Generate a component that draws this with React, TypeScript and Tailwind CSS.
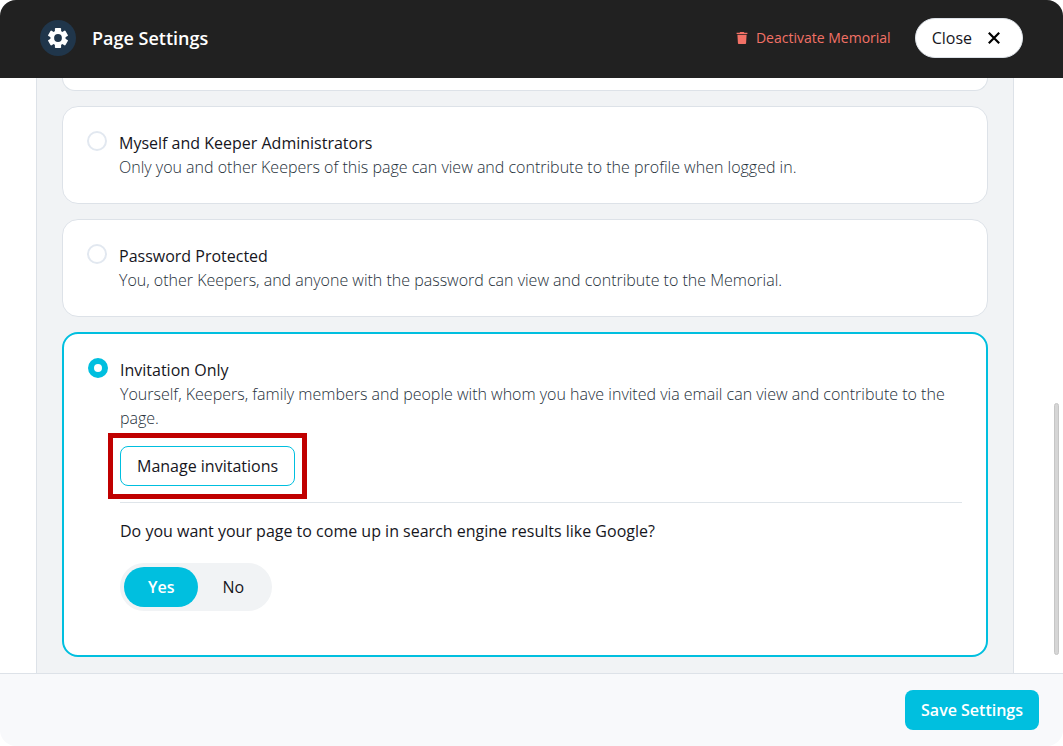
import { useState } from "react";
import type { ReactNode } from "react";

type OptionProps = {
  value: string;
  title: string;
  desc: string;
  selected: string;
  onSelect: (value: string) => void;
  children?: ReactNode;
};

const GearIcon = () => (
  <svg viewBox="0 0 20 20" className="size-5" fill="currentColor" aria-hidden="true">
    <circle cx="10" cy="10" r="7.6" />
    <rect x="6.9" y="0" width="6.2" height="20" rx="0.8" />
    <rect x="6.9" y="0" width="6.2" height="20" rx="0.8" transform="rotate(60 10 10)" />
    <rect x="6.9" y="0" width="6.2" height="20" rx="0.8" transform="rotate(120 10 10)" />
    <circle cx="10" cy="10" r="3.9" fill="#20364b" />
  </svg>
);

const TrashIcon = () => (
  <svg viewBox="0 0 12 12" className="size-3" fill="currentColor" aria-hidden="true">
    <path d="M4.2 0h3.6l.6.7h3v1.2H.6V.7h3zM1.4 2.7h9.2l-.5 8.2c0 .6-.5 1.1-1.1 1.1H3c-.6 0-1.1-.5-1.1-1.1z" />
  </svg>
);

const CloseIcon = () => (
  <svg viewBox="0 0 12 12" className="size-3" fill="none" stroke="#000" strokeWidth="2.2" aria-hidden="true">
    <path d="M.8.8l10.4 10.4M11.2.8L.8 11.2" />
  </svg>
);

const PrivacyOption = ({ value, title, desc, selected, onSelect, children }: OptionProps) => {
  const active = selected === value;

  return (
    <div
      className={`flex gap-3 rounded-2xl bg-white p-6 ${
        active ? "border-2 border-[#00bfdf]" : "border border-[#dde2e8]"
      }`}
    >
      <input
        type="radio"
        id={value}
        name="privacy"
        checked={active}
        onChange={() => onSelect(value)}
        className="size-5 shrink-0 appearance-none rounded-full border-2 border-[#e2e8f0] bg-white checked:border-[6px] checked:border-[#00bfdf]"
      />
      <div className="min-w-0 flex-1">
        <label htmlFor={value} className="block cursor-pointer">
          <span className="block text-[#16161d]">{title}</span>
          <span className="block font-light text-[#25303a]">{desc}</span>
        </label>
        {children}
      </div>
    </div>
  );
};

export default function App() {
  const [privacy, setPrivacy] = useState("invitation");
  const [searchable, setSearchable] = useState("yes");

  return (
    <div className="flex h-screen flex-col overflow-hidden rounded-2xl bg-white font-['Open_Sans',sans-serif] text-base text-[#16161d]">
      <header className="flex shrink-0 items-center justify-between bg-[#212121] px-10 pt-[18px] pb-5">
        <div className="flex items-center gap-4">
          <span className="flex size-9 items-center justify-center rounded-full bg-[#20364b] text-white">
            <GearIcon />
          </span>
          <h1 className="text-lg font-semibold text-white">Page Settings</h1>
        </div>
        <div className="flex items-center gap-6">
          <button type="button" className="flex items-center gap-2 text-sm font-medium text-[#f27166]">
            <TrashIcon />
            Deactivate Memorial
          </button>
          <button
            type="button"
            className="flex h-10 items-center gap-4 rounded-full border border-[#dde2e8] bg-white pr-[22px] pl-4"
          >
            Close
            <CloseIcon />
          </button>
        </div>
      </header>

      <main className="relative min-h-0 flex-1 overflow-hidden pr-[49px] pl-9">
        <div className="flex flex-col gap-[15px] border-x border-[#dde2e8] bg-[#f1f3f5] px-[25px] pb-4">
          <div className="h-[13px] rounded-b-2xl border border-t-0 border-[#dde2e8] bg-white" />
          <PrivacyOption
            value="keepers"
            title="Myself and Keeper Administrators"
            desc="Only you and other Keepers of this page can view and contribute to the profile when logged in."
            selected={privacy}
            onSelect={setPrivacy}
          />
          <PrivacyOption
            value="password"
            title="Password Protected"
            desc="You, other Keepers, and anyone with the password can view and contribute to the Memorial."
            selected={privacy}
            onSelect={setPrivacy}
          />
          <PrivacyOption
            value="invitation"
            title="Invitation Only"
            desc="Yourself, Keepers, family members and people with whom you have invited via email can view and contribute to the page."
            selected={privacy}
            onSelect={setPrivacy}
          >
            <div className="relative mt-4 w-fit">
              <button type="button" className="h-10 rounded-lg border border-[#00bfdf] bg-white px-4">
                Manage invitations
              </button>
              <div className="pointer-events-none absolute -inset-x-3 -inset-y-[13px] border-[5px] border-[#c00000]" />
            </div>
            <hr className="mt-4 border-[#dfe5ea]" />
            <fieldset className="mt-4 mb-5">
              <legend>Do you want your page to come up in search engine results like Google?</legend>
              <div className="mt-5 flex w-fit rounded-full bg-[#f1f3f5] p-1">
                {["yes", "no"].map((option) => (
                  <label
                    key={option}
                    className="flex h-10 cursor-pointer items-center rounded-full px-6 capitalize has-checked:bg-[#00bfdf] has-checked:font-semibold has-checked:text-white"
                  >
                    <input
                      type="radio"
                      name="searchable"
                      value={option}
                      checked={searchable === option}
                      onChange={() => setSearchable(option)}
                      className="sr-only"
                    />
                    {option}
                  </label>
                ))}
              </div>
            </fieldset>
          </PrivacyOption>
        </div>
        <div className="absolute right-1 bottom-[18px] h-[252px] w-[5px] rounded-full border border-[#c6c6c6] bg-[#d6d6d6]" />
      </main>

      <footer className="flex shrink-0 justify-end border-t border-[#dde2e8] bg-[#f8f9fb] px-6 py-4">
        <button type="button" className="h-10 rounded-lg bg-[#00bfdf] px-4 font-semibold text-white">
          Save Settings
        </button>
      </footer>
    </div>
  );
}
